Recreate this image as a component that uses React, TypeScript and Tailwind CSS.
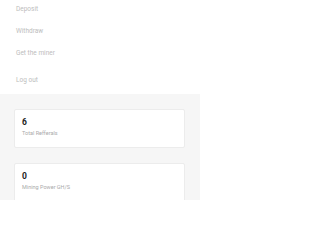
import React from 'react';

const menu = ['Deposit', 'Withdraw', 'Get the miner'];

const stats = [
  { value: '6', label: 'Total Refferals' },
  { value: '0', label: 'Mining Power GH/S' },
];

const StatCard: React.FC<{ value: string; label: string }> = ({ value, label }) => (
  <div className="bg-white border border-[#ececec] rounded-[2px] h-[39px] px-[7px] pt-[7px]">
    <div className="text-[8.5px] leading-[10px] font-bold text-[#222]">{value}</div>
    <div className="mt-[2px] text-[5.5px] leading-[8px] text-[#aaa]">{label}</div>
  </div>
);

export default function App() {
  return (
    <div className="w-[200px] h-[200px] overflow-hidden bg-white" style={{ fontFamily: 'Roboto, "Liberation Sans", sans-serif' }}>
      <nav className="flex flex-col px-[16px] pt-[4px] pb-[9px]">
        {menu.map((m, i) => (
          <a key={m} className={`h-[10px] text-[6.5px] leading-[10px] text-[#bdbdbd] ${i > 0 ? 'mt-[12px]' : ''}`}>
            {m}
          </a>
        ))}
        <a className="mt-[17px] h-[10px] text-[6.5px] leading-[10px] text-[#bdbdbd]">Log out</a>
      </nav>
      <div className="bg-[#f6f6f6] h-full pl-[14px] pr-[15px] pt-[15px] flex flex-col gap-[15px]">
        {stats.map((s) => (
          <StatCard key={s.label} value={s.value} label={s.label} />
        ))}
      </div>
    </div>
  );
}
